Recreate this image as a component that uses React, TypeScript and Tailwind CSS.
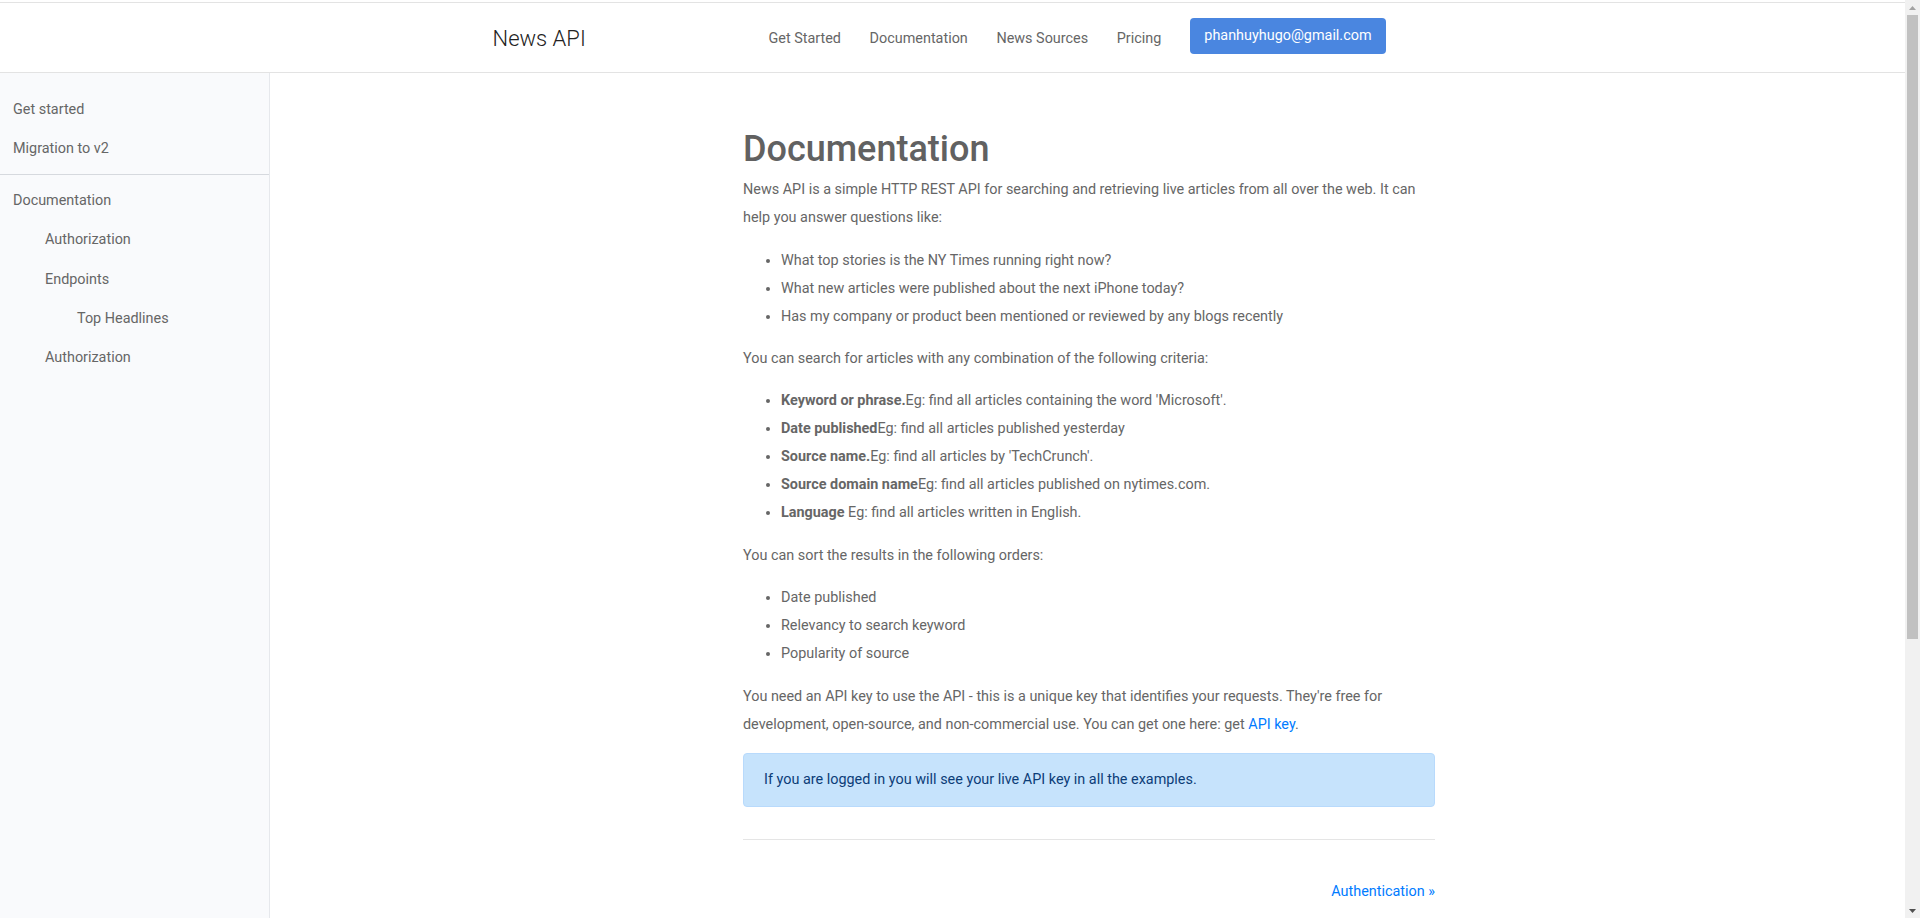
const navLinks = ["Get Started", "Documentation", "News Sources", "Pricing"];

const sideTop = ["Get started", "Migration to v2"];

const sideDocs = [
  { label: "Documentation", indent: "pl-[13px]" },
  { label: "Authorization", indent: "pl-[45px]" },
  { label: "Endpoints", indent: "pl-[45px]" },
  { label: "Top Headlines", indent: "pl-[77px]" },
  { label: "Authorization", indent: "pl-[45px]" },
];

const questions = [
  "What top stories is the NY Times running right now?",
  "What new articles were published about the next iPhone today?",
  "Has my company or product been mentioned or reviewed by any blogs recently",
];

const criteria = [
  { b: "Keyword or phrase.", t: "Eg: find all articles containing the word 'Microsoft'." },
  { b: "Date published", t: "Eg: find all articles published yesterday" },
  { b: "Source name.", t: "Eg: find all articles by 'TechCrunch'." },
  { b: "Source domain name", t: "Eg: find all articles published on nytimes.com." },
  { b: "Language", t: " Eg: find all articles written in English." },
];

const orders = ["Date published", "Relevancy to search keyword", "Popularity of source"];

function Header() {
  return (
    <header className="h-[71px] shrink-0 border-y border-[#e3e3e3] bg-white">
      <div className="mx-auto flex h-full w-[960px] items-center pl-[20px] pt-[2px]">
        <div className="w-[276px] text-[22px] font-light text-[#222]">News API</div>
        <nav className="flex items-center gap-[28.6px] text-[14.4px] text-[#666]">
          {navLinks.map((l) => (
            <a key={l} className="cursor-pointer">
              {l}
            </a>
          ))}
          <button className="mb-[6px] h-[36px] rounded-[4px] bg-[#4a86e0] px-[14.5px] text-[14.4px] text-white">
            phanhuyhugo@gmail.com
          </button>
        </nav>
      </div>
    </header>
  );
}

function Sidebar() {
  return (
    <aside className="w-[270px] shrink-0 border-r border-[#e6e8ec] bg-[#f9fafc] pt-[17px] text-[14.4px] text-[#666]">
      {sideTop.map((s) => (
        <div key={s} className="flex h-[39px] items-center pl-[13px]">
          {s}
        </div>
      ))}
      <div className="mb-[6px] mt-[6px] border-t border-[#d6d9de]" />
      {sideDocs.map((s, i) => (
        <div key={i} className={`flex h-[39.4px] items-center ${s.indent}`}>
          {s.label}
        </div>
      ))}
    </aside>
  );
}

function Content() {
  return (
    <main className="flex-1 bg-white pl-[3px]">
      <div className="mx-auto w-[692px] pt-[55px] text-[14.4px] leading-[28px] text-[#666]">
        <h1 className="mb-[5px] text-[36px] font-medium leading-[1.2] text-[#616161]">Documentation</h1>
        <p className="mb-[14.4px]">
          News API is a simple HTTP REST API for searching and retrieving live articles from all over the web. It can
          help you answer questions like:
        </p>
        <ul className="mb-[14.4px] list-disc pl-[38px]">
          {questions.map((q) => (
            <li key={q}>{q}</li>
          ))}
        </ul>
        <p className="mb-[14.4px]">You can search for articles with any combination of the following criteria:</p>
        <ul className="mb-[14.4px] list-disc pl-[38px]">
          {criteria.map((c) => (
            <li key={c.b}>
              <strong className="font-bold">{c.b}</strong>
              {c.t}
            </li>
          ))}
        </ul>
        <p className="mb-[14.4px]">You can sort the results in the following orders:</p>
        <ul className="mb-[14.4px] list-disc pl-[38px]">
          {orders.map((o) => (
            <li key={o}>{o}</li>
          ))}
        </ul>
        <p className="mb-[14.4px]">
          You need an API key to use the API - this is a unique key that identifies your requests. They're free for
          development, open-source, and non-commercial use. You can get one here: get{" "}
          <a className="text-[#007bff]">API key</a>.
        </p>
        <div className="mb-[14.4px] rounded-[4px] border border-[#b8dafc] bg-[#c6e3fc] px-5 py-3 text-[#0c3d78]">
          If you are logged in you will see your live API key in all the examples.
        </div>
        <hr className="mb-4 mt-[32px] border-t border-[rgba(0,0,0,0.1)]" />
        <div className="pt-[22px] text-right">
          <a className="text-[#007bff]">Authentication »</a>
        </div>
        <div className="h-[400px]" />
      </div>
    </main>
  );
}

function Scrollbar() {
  return (
    <div className="flex w-[15px] shrink-0 flex-col bg-[#f1f1f1]">
      <div className="flex h-[15px] items-center justify-center">
        <svg width="7" height="4" viewBox="0 0 7 4">
          <path d="M3.5 0 L7 4 L0 4 Z" fill="#a3a3a3" />
        </svg>
      </div>
      <div className="flex-1">
        <div className="mx-[2px] h-[624px] bg-[#c1c1c1]" />
      </div>
      <div className="flex h-[15px] items-center justify-center">
        <svg width="7" height="4" viewBox="0 0 7 4">
          <path d="M0 0 L7 0 L3.5 4 Z" fill="#505050" />
        </svg>
      </div>
    </div>
  );
}

export default function App() {
  return (
    <div className="flex h-[918px] overflow-hidden bg-white font-['Roboto','Liberation_Sans',sans-serif]">
      <div className="flex min-w-0 flex-1 flex-col pt-[2px]">
        <Header />
        <div className="flex min-h-0 flex-1 overflow-hidden">
          <Sidebar />
          <Content />
        </div>
      </div>
      <Scrollbar />
    </div>
  );
}
